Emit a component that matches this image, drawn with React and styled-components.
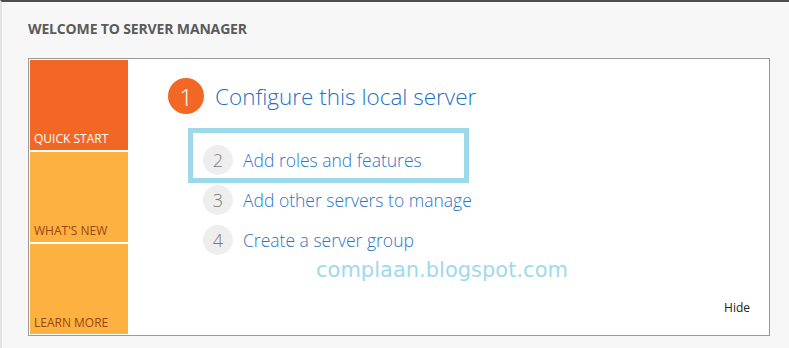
import styled, { createGlobalStyle } from "styled-components";

const GlobalStyle = createGlobalStyle`
    html, body {
        margin: 0;
        padding: 0;
        background: #f7f7f7;
    }
    body {
        font-family: "Open Sans", "Noto Sans", sans-serif;
    }
`;

const Page = styled.div`
    box-sizing: border-box;
    width: 789px;
    height: 348px;
    overflow: hidden;
    border-top: 2px solid #4e4e4e;
    border-left: 2px solid #e2e2e2;
    padding: 18px 0 0 26px;
`;

const Title = styled.h1`
    margin: 0 0 20px 0;
    font-size: 14px;
    line-height: 18px;
    font-weight: 700;
    letter-spacing: -0.15px;
    color: #5b5b5b;
`;

const Panel = styled.div`
    box-sizing: border-box;
    display: flex;
    width: 742px;
    height: 278px;
    padding: 1px;
    background: #fff;
    border: 1px solid #9a9a9a;
`;

const Tiles = styled.div`
    display: flex;
    flex-direction: column;
    gap: 2px;
    width: 98px;
`;

const Tile = styled.div`
    box-sizing: border-box;
    height: 90px;
    display: flex;
    align-items: flex-end;
    padding: 0 0 3px 4px;
    background: ${(p) => (p.$active ? "#f26724" : "#fdb140")};
    color: ${(p) => (p.$active ? "#ffffff" : "#9b4512")};
    font-size: 12px;
    line-height: 16px;
`;

const Content = styled.div`
    flex: 1;
    display: flex;
    flex-direction: column;
    padding: 18px 18px 18px 40px;
`;

const Heading = styled.div`
    display: flex;
    align-items: center;
    gap: 11px;
    height: 36px;
`;

const BigBadge = styled.span`
    width: 36px;
    height: 36px;
    border-radius: 50%;
    background: #f26724;
    color: #fff;
    display: flex;
    align-items: center;
    justify-content: center;
    font-size: 24px;
    font-weight: 300;
`;

const HeadingText = styled.span`
    font-size: 22.5px;
    font-weight: 300;
    color: #2470c2;
`;

const Steps = styled.div`
    display: flex;
    flex-direction: column;
    margin: 26px 0 0 35px;
`;

const Step = styled.div`
    position: relative;
    display: flex;
    align-items: center;
    gap: 10px;
    height: 40px;
`;

const Highlight = styled.div`
    position: absolute;
    box-sizing: border-box;
    top: -12px;
    left: -15px;
    width: 281px;
    height: 55px;
    border: 5px solid #9dd9e9;
`;

const Badge = styled.span`
    width: 30px;
    height: 30px;
    border-radius: 50%;
    background: #eeeeee;
    color: #7a7a7a;
    display: flex;
    align-items: center;
    justify-content: center;
    font-size: 18px;
    font-weight: 300;
`;

const StepText = styled.span`
    font-size: 17.5px;
    font-weight: 300;
    color: #2a76c6;
`;

const Watermark = styled.div`
    margin: -2px 0 0 148px;
    font-family: "DejaVu Sans", sans-serif;
    font-size: 21px;
    line-height: 25px;
    color: #9fd9ec;
`;

const Hide = styled.div`
    margin-top: auto;
    align-self: flex-end;
    font-size: 12px;
    line-height: 16px;
    color: #222;
`;

const steps = [
    { n: 2, text: "Add roles and features", marked: true },
    { n: 3, text: "Add other servers to manage" },
    { n: 4, text: "Create a server group" },
];

function App() {
    return (
        <Page>
            <GlobalStyle />
            <Title>WELCOME TO SERVER MANAGER</Title>
            <Panel>
                <Tiles>
                    <Tile $active>QUICK START</Tile>
                    <Tile>WHAT'S NEW</Tile>
                    <Tile>LEARN MORE</Tile>
                </Tiles>
                <Content>
                    <Heading>
                        <BigBadge>1</BigBadge>
                        <HeadingText>Configure this local server</HeadingText>
                    </Heading>
                    <Steps>
                        {steps.map((s) => (
                            <Step key={s.n}>
                                {s.marked && <Highlight />}
                                <Badge>{s.n}</Badge>
                                <StepText>{s.text}</StepText>
                            </Step>
                        ))}
                    </Steps>
                    <Watermark>complaan.blogspot.com</Watermark>
                    <Hide>Hide</Hide>
                </Content>
            </Panel>
        </Page>
    );
}

export default App;
